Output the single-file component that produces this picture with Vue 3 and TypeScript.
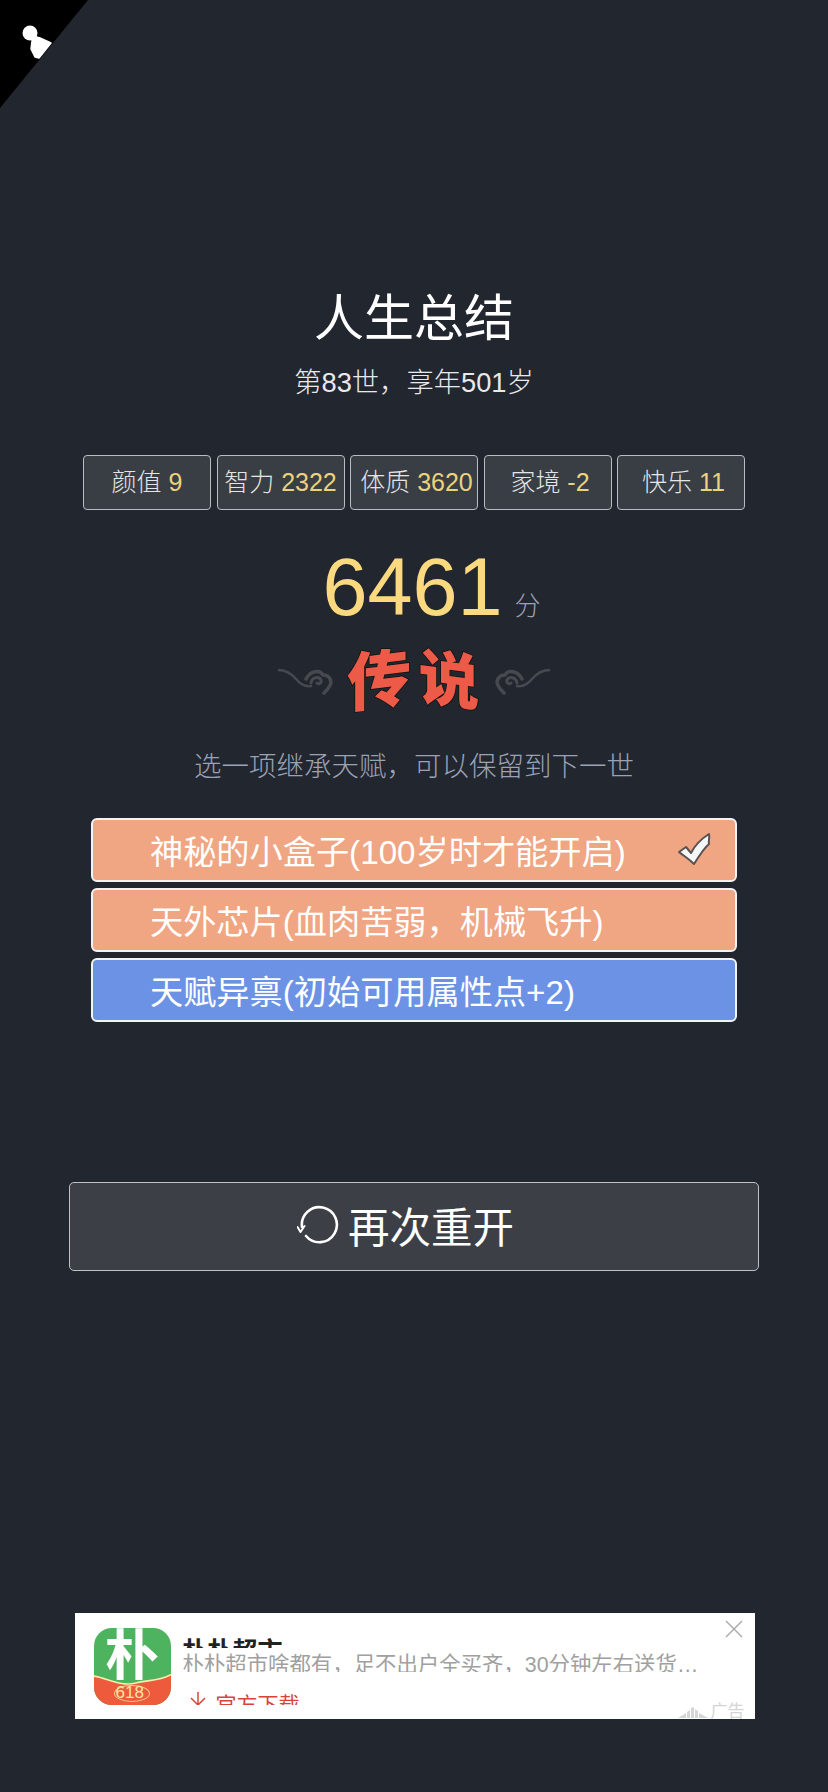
<template>
  <div class="page">
    <a class="corner">
      <svg viewBox="0 0 88 108" width="88" height="108">
        <path d="M0 0H88L0 108Z" fill="#000" />
        <circle cx="30" cy="33" r="7.5" fill="#fff" />
        <path d="M33 36l7 2 11 5-12 15-4-1-4-8 1-8Z" fill="#fff" stroke="#fff" stroke-width="1.5" stroke-linejoin="round" />
      </svg>
    </a>

    <h1 class="title">人生总结</h1>
    <p class="subtitle">第83世，享年501岁</p>

    <ul class="stats">
      <li v-for="s in stats" :key="s.label" class="stat" :class="{ nudge: s.nudge }">
        {{ s.label }} <span class="stat-num">{{ s.value }}</span>
      </li>
    </ul>

    <div class="score">
      <span class="score-num">6461</span>
      <span class="score-unit">分</span>
    </div>

    <div class="grade">
      <svg class="cloud" viewBox="0 0 56 27" width="56" height="27">
        <path d="M0 2C8 2 13 5 18 11C22 16 27 19 33 18" fill="none" stroke="#46494e" stroke-width="2.6" stroke-linecap="round" />
        <path d="M28 11C32 3 42 1 45 7C52 7 55 14 51 19C50 21 48 23 46 25" fill="none" stroke="#46494e" stroke-width="3.6" stroke-linecap="round" />
        <path d="M33 15C34 9 41 8 43 12C44 15 41 17 39 15" fill="none" stroke="#46494e" stroke-width="3" stroke-linecap="round" />
      </svg>
      <span class="grade-text"><span class="ch1">传</span><span class="ch2">说</span></span>
      <svg class="cloud flip" viewBox="0 0 56 27" width="56" height="27">
        <path d="M0 2C8 2 13 5 18 11C22 16 27 19 33 18" fill="none" stroke="#46494e" stroke-width="2.6" stroke-linecap="round" />
        <path d="M28 11C32 3 42 1 45 7C52 7 55 14 51 19C50 21 48 23 46 25" fill="none" stroke="#46494e" stroke-width="3.6" stroke-linecap="round" />
        <path d="M33 15C34 9 41 8 43 12C44 15 41 17 39 15" fill="none" stroke="#46494e" stroke-width="3" stroke-linecap="round" />
      </svg>
    </div>

    <p class="hint">选一项继承天赋，可以保留到下一世</p>

    <ul class="talents">
      <li v-for="t in talents" :key="t.text" class="talent" :class="t.kind">
        <span>{{ t.text }}</span>
        <svg v-if="t.checked" class="check" viewBox="0 0 34 34" width="34" height="34">
          <path d="M2 20L9 15L14 21C18 13 24 7 32 2C33 7 31 9 32 12C27 16 22 24 17 32C12 27 7 24 2 20Z" fill="#f4f8fa" stroke="#5a5250" stroke-width="2" stroke-linejoin="round" />
        </svg>
      </li>
    </ul>

    <button class="again">
      <svg viewBox="0 0 42 42" width="42" height="42">
        <path d="M5 23A17.5 17.5 0 1 1 9 32" fill="none" stroke="#fff" stroke-width="2.6" stroke-linecap="round" />
        <path d="M0.5 23L3.5 28L7.5 22" fill="none" stroke="#fff" stroke-width="2" stroke-linecap="round" stroke-linejoin="round" />
      </svg>
      <span>再次重开</span>
    </button>

    <div class="ad">
      <div class="ad-logo">
        <span class="ad-logo-char">朴</span>
        <svg class="ad-logo-wave" viewBox="0 0 77 32" width="77" height="32">
          <path d="M-1 3C14 5 26 14 42 10C54 7 66 8 78 1V33H-1Z" fill="#ee5a3c" stroke="#f5ecb0" stroke-width="1.6" />
        </svg>
        <span class="ad-logo-oval"></span>
        <span class="ad-logo-num">618</span>
      </div>
      <div class="ad-body">
        <div class="ad-name">朴朴超市</div>
        <div class="ad-desc">朴朴超市啥都有，足不出户全买齐，30分钟左右送货…</div>
        <div class="ad-link">
          <svg viewBox="0 0 16 14" width="16" height="14">
            <path d="M8 0V13M1 6L8 13L15 6" fill="none" stroke="#d9443a" stroke-width="1.5" />
          </svg>
          <span>官方下载</span>
        </div>
      </div>
      <svg class="ad-close" viewBox="0 0 18 18" width="18" height="18">
        <path d="M1 1L17 17M17 1L1 17" stroke="#a9a9a9" stroke-width="1.4" />
      </svg>
      <div class="ad-tag">
        <svg viewBox="0 0 30 11" width="30" height="11">
          <path d="M0 11L8 6V11ZM9 11V5L12 3V11ZM13 11V1L16 0V11ZM17 11V2L20 4V11ZM21 11V6L30 11Z" fill="#d5d5d5" />
        </svg>
        <span>广告</span>
      </div>
    </div>
  </div>
</template>

<script setup lang="ts">
interface Stat {
  label: string;
  value: number;
  nudge?: boolean;
}

interface Talent {
  text: string;
  kind: "orange" | "blue";
  checked?: boolean;
}

const stats: Stat[] = [
  { label: "颜值", value: 9 },
  { label: "智力", value: 2322 },
  { label: "体质", value: 3620, nudge: true },
  { label: "家境", value: -2, nudge: true },
  { label: "快乐", value: 11, nudge: true },
];

const talents: Talent[] = [
  { text: "神秘的小盒子(100岁时才能开启)", kind: "orange", checked: true },
  { text: "天外芯片(血肉苦弱，机械飞升)", kind: "orange" },
  { text: "天赋异禀(初始可用属性点+2)", kind: "blue" },
];
</script>

<style>
body {
  background: #22262f;
}
</style>

<style scoped>
.page {
  position: relative;
  height: 1792px;
  box-sizing: border-box;
  padding-top: 287px;
  background: #22262f;
  color: #fff;
  font-family: "Liberation Sans", "Noto Sans CJK SC", sans-serif;
  overflow: hidden;
}

.corner {
  position: absolute;
  left: 0;
  top: 0;
  line-height: 0;
}

.title {
  margin: 0;
  text-align: center;
  font-size: 50px;
  line-height: 64px;
  font-weight: 400;
}

.subtitle {
  margin: 14px 0 0;
  text-align: center;
  font-size: 27.3px;
  line-height: 36px;
  font-weight: 300;
  color: #e8e9ec;
}

.stats {
  display: flex;
  justify-content: center;
  gap: 5.5px;
  margin: 54px 0 0;
  padding: 0;
  list-style: none;
}

.stat {
  width: 128px;
  height: 55px;
  box-sizing: border-box;
  border: 1.5px solid #b9bcc0;
  border-radius: 4px;
  background: #393d44;
  color: #e4e5e7;
  font-size: 25px;
  font-weight: 300;
  line-height: 52px;
  text-align: center;
  white-space: nowrap;
}

.stat.nudge {
  padding-left: 5px;
}

.stat-num {
  color: #ecd27c;
}

.score {
  display: flex;
  justify-content: center;
  align-items: baseline;
  margin-top: 29px;
  padding-left: 35px;
}

.score-num {
  font-size: 81px;
  line-height: 96px;
  color: #fbd97f;
}

.score-unit {
  margin-left: 12px;
  font-size: 26px;
  font-weight: 300;
  color: #9ba2b6;
}

.grade {
  display: flex;
  justify-content: center;
  align-items: center;
  gap: 13px;
  height: 66px;
  margin-top: 13px;
}

.grade-text {
  display: flex;
  gap: 6px;
  font-size: 64px;
  line-height: 66px;
  font-weight: 900;
  color: #ee5a48;
  -webkit-text-stroke: 1.5px #111;
  paint-order: stroke fill;
}

.ch1 {
  transform: skewY(-7deg);
}

.ch2 {
  transform: skewY(7deg) scale(0.95);
}

.cloud.flip {
  transform: scaleX(-1);
}

.hint {
  margin: 35px 0 0;
  text-align: center;
  font-size: 27.5px;
  line-height: 36px;
  font-weight: 300;
  color: #9ba2b6;
}

.talents {
  display: flex;
  flex-direction: column;
  gap: 6px;
  margin: 33px 91px 0;
  padding: 0;
  list-style: none;
}

.talent {
  height: 64px;
  box-sizing: border-box;
  display: flex;
  align-items: center;
  justify-content: space-between;
  padding: 0 24px 2px 57px;
  border: 2px solid #f3f3f3;
  border-radius: 6px;
  font-size: 33.2px;
  white-space: nowrap;
}

.talent.orange {
  background: #f0a583;
}

.talent.blue {
  background: #6c92e6;
}

.again {
  display: flex;
  align-items: center;
  justify-content: center;
  gap: 9px;
  width: 690px;
  height: 89px;
  margin: 160px 0 0 69px;
  padding: 0 17px 3px 0;
  border: 1.5px solid #bfc1c4;
  border-radius: 5px;
  background: #3c4046;
  color: #fff;
  font: inherit;
  font-size: 41.5px;
}

.ad {
  position: relative;
  display: flex;
  width: 680px;
  height: 106px;
  margin: 342px 0 0 74.5px;
  box-sizing: border-box;
  padding: 15px 0 0 19px;
  background: #fff;
  overflow: hidden;
}

.ad-logo {
  position: relative;
  flex: none;
  width: 77px;
  height: 77px;
  border-radius: 18px;
  background: #4db35e;
  overflow: hidden;
}

.ad-logo-char {
  position: absolute;
  left: 0;
  right: 0;
  top: -2px;
  text-align: center;
  font-size: 54px;
  line-height: 60px;
  font-weight: 700;
  color: #fff;
}

.ad-logo-wave {
  position: absolute;
  left: 0;
  bottom: 0;
}

.ad-logo-oval {
  position: absolute;
  left: 20px;
  bottom: 3px;
  width: 34px;
  height: 15px;
  border: 1px solid #f5c98a;
  border-radius: 50%;
}

.ad-logo-num {
  position: absolute;
  left: 22px;
  bottom: 3px;
  font-size: 17px;
  line-height: 18px;
  color: #fbe6a2;
}

.ad-body {
  margin-left: 12px;
  min-width: 0;
}

.ad-name {
  height: 20px;
  overflow: hidden;
  font-size: 25px;
  line-height: 47px;
  font-weight: 700;
  color: #222;
}

.ad-desc {
  height: 22px;
  margin-top: 2px;
  overflow: hidden;
  font-size: 21.4px;
  line-height: 30px;
  color: #a0a0a0;
  white-space: nowrap;
}

.ad-link {
  display: flex;
  gap: 10px;
  height: 13px;
  margin: 20px 0 0 7px;
  overflow: hidden;
  font-size: 21px;
  line-height: 26px;
  color: #d9443a;
}

.ad-link svg {
  flex: none;
}

.ad-close {
  position: absolute;
  right: 12px;
  top: 7px;
}

.ad-tag {
  position: absolute;
  right: 10px;
  bottom: -2px;
  display: flex;
  align-items: center;
  gap: 3px;
  font-size: 17px;
  line-height: 18px;
  color: #d5d5d5;
}
</style>
